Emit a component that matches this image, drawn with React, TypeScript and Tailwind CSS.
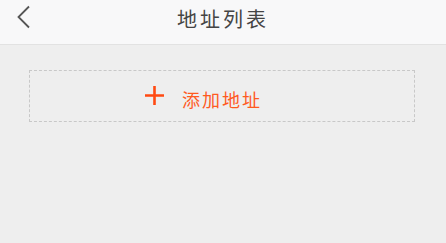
export default function App() {
  return (
    <div
      className="flex h-[243px] w-[446px] flex-col bg-[#eeeeee]"
      style={{ fontFamily: '"Noto Sans CJK SC", "Noto Sans", sans-serif' }}
    >
      <header className="relative flex h-[45px] shrink-0 items-center justify-center border-b border-[#e2e2e2] bg-[#f8f8f9]">
        <button className="absolute left-[14px] top-[5px] flex h-[24px] w-[18px] items-center justify-center text-[#555555]">
          <svg width="15" height="24" viewBox="0 0 15 24" fill="none">
            <path d="M13 1.5 L2.5 12 L13 22.5" stroke="currentColor" strokeWidth="1.8" />
          </svg>
        </button>
        <h1 className="-mt-[6px] text-[20px] leading-none tracking-[3px] text-[#444444]">地址列表</h1>
      </header>

      <div className="px-[29px] pt-[25px] pr-[31px]">
        <button className="flex h-[52px] w-full items-center justify-center border border-dashed border-[#c8c8c8]">
          <span className="relative mt-[5px] text-[18px] leading-none tracking-[2px] text-[#ff5a1f]">
            <svg
              className="absolute right-[calc(100%+18px)] top-[-4px]"
              width="19"
              height="19"
              viewBox="0 0 19 19"
            >
              <path d="M9.5 0 V19 M0 9.5 H19" stroke="#ff4a12" strokeWidth="2.6" />
            </svg>
            添加地址
          </span>
        </button>
      </div>
    </div>
  );
}
